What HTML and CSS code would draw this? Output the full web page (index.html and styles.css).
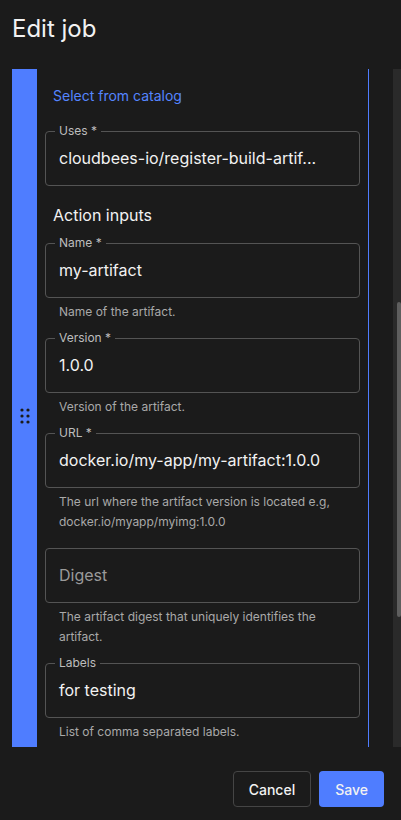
FILE: index.html
```html
<!DOCTYPE html>
<html lang="en">
<head>
<meta charset="UTF-8">
<meta name="viewport" content="width=device-width, initial-scale=1.0">
<title>Edit job</title>
<link rel="stylesheet" href="styles.css">
</head>
<body>

<h1 class="title">Edit job</h1>

<div class="main">
  <div class="card">
    <div class="handle">
      <svg width="12" height="18" viewBox="0 0 12 18">
        <circle cx="3" cy="3" r="1.6"/><circle cx="9" cy="3" r="1.6"/>
        <circle cx="3" cy="9" r="1.6"/><circle cx="9" cy="9" r="1.6"/>
        <circle cx="3" cy="15" r="1.6"/><circle cx="9" cy="15" r="1.6"/>
      </svg>
    </div>
    <div class="content">
      <div class="catalog">Select from catalog</div>

      <fieldset class="field">
        <legend>Uses *</legend>
        <div class="value">cloudbees-io/register-build-artif...</div>
      </fieldset>

      <div class="section">Action inputs</div>

      <fieldset class="field">
        <legend>Name *</legend>
        <div class="value">my-artifact</div>
      </fieldset>
      <div class="help">Name of the artifact.</div>

      <fieldset class="field">
        <legend>Version *</legend>
        <div class="value">1.0.0</div>
      </fieldset>
      <div class="help">Version of the artifact.</div>

      <fieldset class="field">
        <legend>URL *</legend>
        <div class="value">docker.io/my-app/my-artifact:1.0.0</div>
      </fieldset>
      <div class="help">The url where the artifact version is located e.g, docker.io/myapp/myimg:1.0.0</div>

      <fieldset class="field empty">
        <div class="value placeholder">Digest</div>
      </fieldset>
      <div class="help">The artifact digest that uniquely identifies the artifact.</div>

      <fieldset class="field">
        <legend>Labels</legend>
        <div class="value">for testing</div>
      </fieldset>
      <div class="help">List of comma separated labels.</div>
    </div>
  </div>
  <div class="scrollbar"><div class="thumb"></div></div>
</div>

<div class="footer">
  <button class="btn cancel">Cancel</button>
  <button class="btn save">Save</button>
</div>

</body>
</html>
```

FILE: styles.css
```css
body {
  margin: 0;
  background-color: #1b1b1b;
  color: #f2f2f2;
  font-family: Inter, "Noto Sans", sans-serif;
  width: 401px;
  height: 820px;
  overflow: hidden;
}
.title {
  margin: 0;
  height: 55px;
  padding: 14px 12px 0;
  font-size: 24px;
  font-weight: 400;
  line-height: 29px;
}
.main {
  display: flex;
  height: 678px;
  padding-left: 12px;
}
.card {
  display: flex;
  width: 356px;
  border-right: 1px solid #4f7dff;
  overflow: hidden;
}
.handle {
  width: 25px;
  flex-shrink: 0;
  background-color: #4f7dff;
  display: flex;
  align-items: center;
  justify-content: center;
  padding-top: 16px;
  box-sizing: border-box;
}
.handle svg {
  fill: #1b1b1b;
}
.content {
  flex: 1;
  padding: 17px 8px 0;
}
.catalog {
  margin: 0 0 18px 8px;
  font-size: 14px;
  line-height: 20px;
  color: #5585ff;
}
.field {
  margin: 0;
  padding: 0 9px 7px;
  border: 1px solid #545454;
  border-radius: 4px;
  min-width: 0;
}
.field legend {
  padding: 0 4px;
  font-size: 12px;
  line-height: 14px;
  color: #bdbdbd;
}
.value {
  padding: 0 4px;
  height: 40px;
  line-height: 40px;
  font-size: 16px;
  white-space: nowrap;
  overflow: hidden;
}
.field.empty {
  margin-top: 16px;
  padding-bottom: 0;
}
.field.empty .value {
  height: 53px;
  line-height: 53px;
}
.placeholder {
  color: #9a9a9a;
}
.section {
  margin: 17px 0 9px 8px;
  font-size: 16px;
  line-height: 24px;
}
.help {
  margin: 4px 0 9px 14px;
  font-size: 12px;
  line-height: 20px;
  color: #a9a9a9;
}
.scrollbar {
  margin-left: 24px;
  width: 8px;
  background-color: #2a2a2a;
}
.thumb {
  margin: 233px 0 0 4px;
  width: 4px;
  height: 315px;
  border-radius: 2px;
  background-color: #5e5e5e;
}
.footer {
  display: flex;
  justify-content: flex-end;
  gap: 8px;
  padding: 24px 17px 0 0;
}
.btn {
  height: 36px;
  border-radius: 4px;
  font-family: Inter, "Noto Sans", sans-serif;
  font-size: 14px;
  font-weight: 500;
  color: #f2f2f2;
  cursor: pointer;
}
.cancel {
  padding: 0 15px;
  background-color: #1b1b1b;
  border: 1px solid #454545;
}
.save {
  padding: 0 16px;
  background-color: #4f7dff;
  border: none;
}
```
